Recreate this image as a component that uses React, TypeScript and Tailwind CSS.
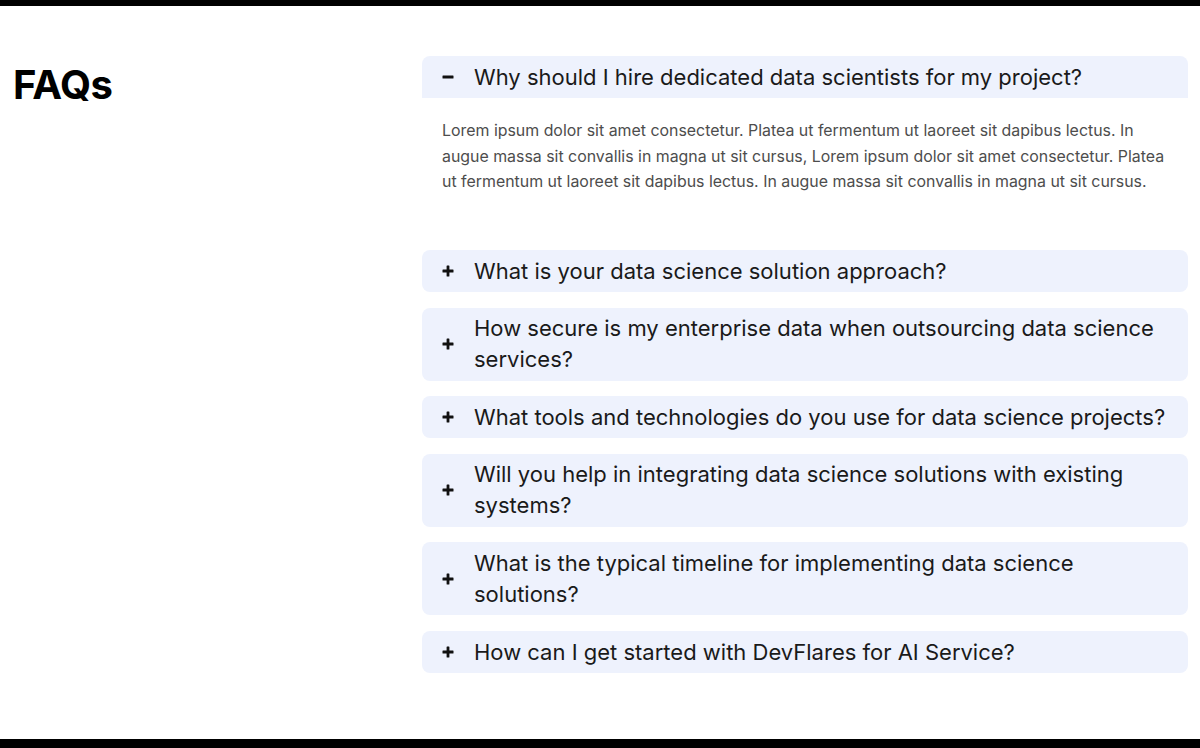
import { useState } from "react";

const faqs = [
  {
    q: "Why should I hire dedicated data scientists for my project?",
    a: "Lorem ipsum dolor sit amet consectetur. Platea ut fermentum ut laoreet sit dapibus lectus. In augue massa sit convallis in magna ut sit cursus, Lorem ipsum dolor sit amet consectetur. Platea ut fermentum ut laoreet sit dapibus lectus. In augue massa sit convallis in magna ut sit cursus.",
  },
  { q: "What is your data science solution approach?", a: "" },
  { q: "How secure is my enterprise data when outsourcing data science services?", a: "" },
  { q: "What tools and technologies do you use for data science projects?", a: "" },
  { q: "Will you help in integrating data science solutions with existing systems?", a: "" },
  { q: "What is the typical timeline for implementing data science solutions?", a: "" },
  { q: "How can I get started with DevFlares for AI Service?", a: "" },
];

const Icon = ({ open }: { open: boolean }) => (
  <svg width="12" height="12" viewBox="0 0 12 12" className="shrink-0">
    <rect x="0.5" y="4.6" width="11" height="2.8" rx="0.5" fill="#111" />
    {!open && <rect x="4.6" y="0.5" width="2.8" height="11" rx="0.5" fill="#111" />}
  </svg>
);

const App = () => {
  const [open, setOpen] = useState(0);

  return (
    <div
      className="h-[748px] flex flex-col bg-white"
      style={{ fontFamily: "Inter, 'Open Sans', sans-serif" }}
    >
      <div className="h-[6px] bg-black" />
      <div className="flex-1 flex justify-between pl-[13px] pr-[12px] pt-[50px]">
        <h2 className="text-[40px] font-bold leading-[48px] text-black tracking-[-0.5px] mt-[5px]">
          FAQs
        </h2>
        <div className="w-[766px] flex flex-col gap-[15.6px]">
          {faqs.map((f, i) => {
            const isOpen = open === i;
            return (
              <div key={i}>
                <button
                  onClick={() => setOpen(isOpen ? -1 : i)}
                  className={`w-full flex items-center gap-5 bg-[#eef2fd] pl-5 pr-5 py-[5.5px] text-left ${
                    isOpen ? "rounded-t-lg" : "rounded-lg"
                  }`}
                >
                  <Icon open={isOpen} />
                  <span className="text-[22px] leading-[31px] text-[#1a1a1a]">{f.q}</span>
                </button>
                {isOpen && f.a && (
                  <p className="pl-5 pr-3 pt-[20px] pb-[40px] text-[15.9px] leading-[25.5px] text-[#4d4d4d]">
                    {f.a}
                  </p>
                )}
              </div>
            );
          })}
        </div>
      </div>
      <div className="h-[9px] bg-black" />
    </div>
  );
};

export default App;
